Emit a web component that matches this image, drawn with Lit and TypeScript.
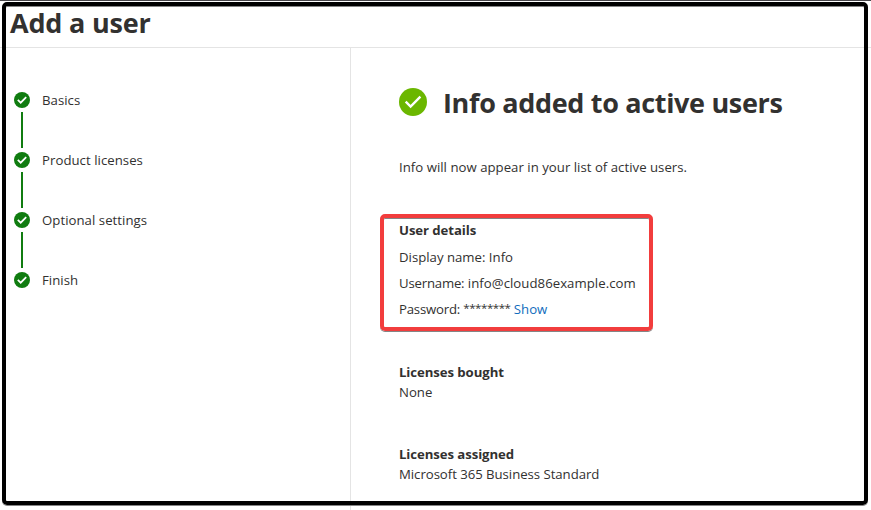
import { LitElement, html, svg, css } from "lit";
import { customElement, property } from "lit/decorators.js";

@customElement("check-badge")
class CheckBadge extends LitElement {
  @property({ type: Boolean }) large = false;
  static styles = css`
    :host { display: block; flex: none; line-height: 0; }
    svg { display: block; }
    .small { width: 16px; height: 16px; }
    .big { width: 28px; height: 28px; }
    .tick { fill: none; stroke: #fff; }
    .green { fill: #107c10; }
    .lime { fill: #6bb700; }
  `;
  render() {
    return this.large
      ? html`<svg class="big" viewBox="0 0 28 28">${svg`<circle class="lime" cx="14" cy="14" r="14"/><path class="tick" stroke-width="2.4" d="M6.7 13.6 11.6 18.5 21.4 8.7"/>`}</svg>`
      : html`<svg class="small" viewBox="0 0 16 16">${svg`<circle class="green" cx="8" cy="8" r="8"/><path class="tick" stroke-width="1.8" d="M3.8 7.9 6.7 10.7 12.2 5.2"/>`}</svg>`;
  }
}

@customElement("app-root")
class AppRoot extends LitElement {
  private steps = ["Basics", "Product licenses", "Optional settings", "Finish"];

  static styles = css`
    :host {
      display: block;
      position: relative;
      box-sizing: border-box;
      width: 871px;
      height: 510px;
      overflow: hidden;
      background: #fff;
      border-top: 1px solid #48464a;
      color: #323130;
      font: 13.2px/20px "Open Sans", "Noto Sans", sans-serif;
      white-space: nowrap;
    }
    * { box-sizing: border-box; }
    h1, h2, h3, p { margin: 0; }
    header { height: 47px; padding: 4px 0 0 10px; border-bottom: 1px solid #e4e4e4; }
    h1, h2 { font-size: 27px; line-height: 36px; font-weight: 700; letter-spacing: -0.33px; }
    h1 { letter-spacing: -0.2px; }
    h2 { padding-top: 1px; }
    h3 { font-size: 13.2px; line-height: 20px; font-weight: 700; letter-spacing: -0.08px; }
    .body { display: flex; height: 462px; }
    nav { width: 351px; padding: 42px 0 0 14px; border-right: 1px solid #e4e4e4; }
    .step { display: flex; gap: 12px; height: 60px; letter-spacing: 0.04px; }
    .rail { display: flex; flex-direction: column; align-items: center; gap: 4px; width: 16px; padding-top: 2px; }
    .line { width: 2px; height: 36px; background: #107c10; }
    main { flex: 1; padding: 36px 0 0 48px; }
    .title { display: flex; align-items: center; gap: 16px; height: 36px; }
    .intro { margin-top: 37px; letter-spacing: 0.02px; }
    .details { width: 273px; height: 117px; margin: 37px 0 0 -19px; padding: 2px 0 0 15px; border: 4px solid #f23d3d; border-radius: 5px; box-shadow: 0 1px 0 #858585, inset 0 1px 0 #858585; }
    .details p { line-height: 26px; }
    .details .label { letter-spacing: -0.2px; }
    .details .email { letter-spacing: 0.04px; }
    .details .mask { font-size: 11.5px; line-height: 1; letter-spacing: -0.45px; vertical-align: 2px; }
    .details h3 + p { margin-top: 4px; }
    a { color: #0f6cbd; }
    .bought { margin-top: 31px; }
    .assigned { margin-top: 42px; }
    .assigned p { letter-spacing: -0.04px; }
    .frame { position: absolute; left: 2px; top: 1px; width: 866px; height: 503px; border: 4px solid #000; border-radius: 5px; box-shadow: 0 1px 0 #858585, inset 0 1px 0 #858585; pointer-events: none; }
  `;

  render() {
    return html`
      <header><h1>Add a user</h1></header>
      <div class="body">
        <nav>
          ${this.steps.map((s, i) => html`
            <div class="step">
              <div class="rail">
                <check-badge></check-badge>
                ${i < this.steps.length - 1 ? html`<div class="line"></div>` : null}
              </div>
              <span>${s}</span>
            </div>`)}
        </nav>
        <main>
          <div class="title"><check-badge large></check-badge><h2>Info added to active users</h2></div>
          <p class="intro">Info will now appear in your list of active users.</p>
          <section class="details">
            <h3>User details</h3>
            <p>Display name: Info</p>
            <p><span class="label">Username:</span> <span class="email">info@cloud86example.com</span></p>
            <p><span class="label">Password: </span><span class="mask">********</span> <a>Show</a></p>
          </section>
          <section class="bought"><h3>Licenses bought</h3><p>None</p></section>
          <section class="assigned"><h3>Licenses assigned</h3><p>Microsoft 365 Business Standard</p></section>
        </main>
      </div>
      <div class="frame"></div>
    `;
  }
}
